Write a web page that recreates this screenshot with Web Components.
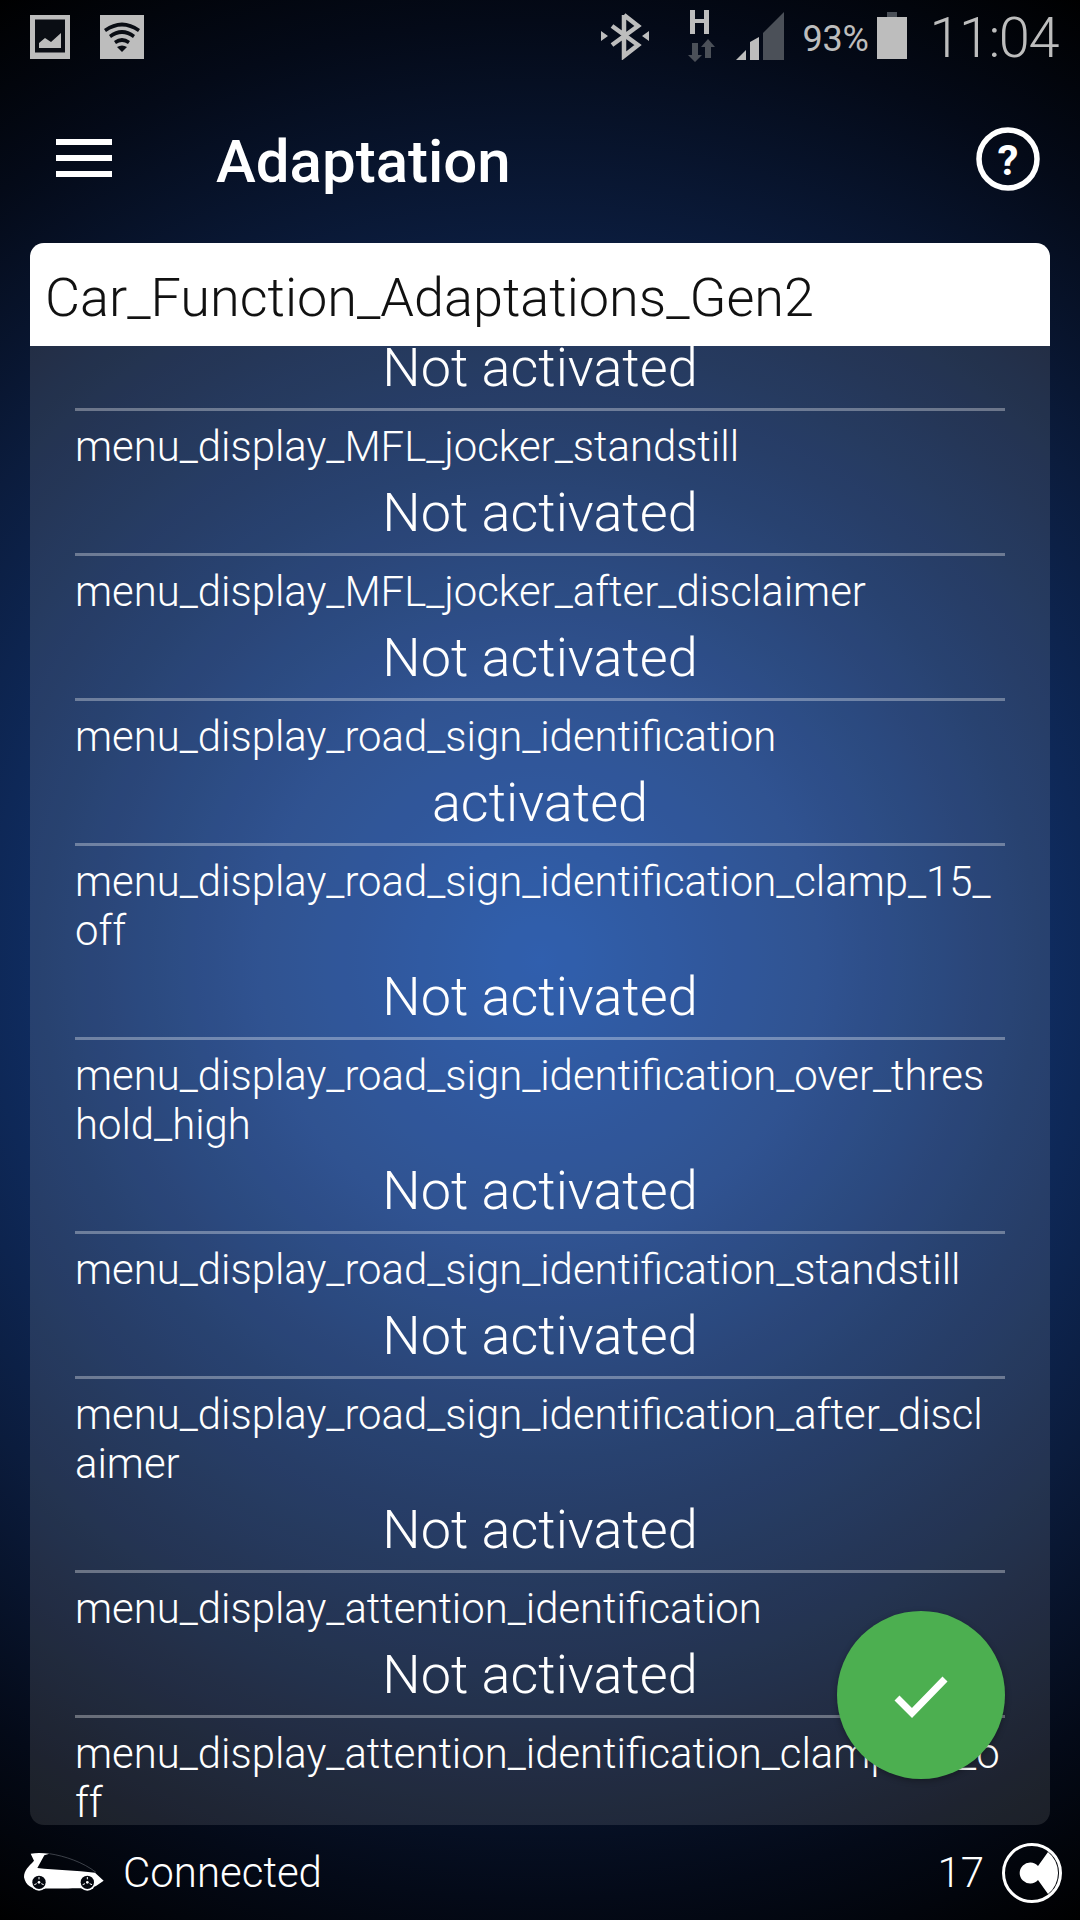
<!DOCTYPE html>
<html>
<head>
<meta charset="utf-8">
<style>
  html, body { margin: 0; padding: 0; }
  body {
    width: 1080px;
    height: 1920px;
    overflow: hidden;
    font-family: Roboto, "Liberation Sans", sans-serif;
    color: #fff;
    background: radial-gradient(circle 1105px at 540px 960px, #184da5 0%, #183f85 25%, #0f2c60 45%, #0b1c3d 65%, #040a18 85%, #000 100%);
  }
  #page { position: relative; display: flex; flex-direction: column; height: 1920px; }
</style>
</head>
<body>
<div id="page">
  <status-bar></status-bar>
  <app-toolbar title="Adaptation"></app-toolbar>
  <adaptation-card title="Car_Function_Adaptations_Gen2">
    <adaptation-row clipped value="Not activated"></adaptation-row>
    <adaptation-row label="menu_display_MFL_jocker_standstill" value="Not activated"></adaptation-row>
    <adaptation-row label="menu_display_MFL_jocker_after_disclaimer" value="Not activated"></adaptation-row>
    <adaptation-row label="menu_display_road_sign_identification" value="activated"></adaptation-row>
    <adaptation-row label="menu_display_road_sign_identification_clamp_15_off" value="Not activated"></adaptation-row>
    <adaptation-row label="menu_display_road_sign_identification_over_threshold_high" value="Not activated"></adaptation-row>
    <adaptation-row label="menu_display_road_sign_identification_standstill" value="Not activated"></adaptation-row>
    <adaptation-row label="menu_display_road_sign_identification_after_disclaimer" value="Not activated"></adaptation-row>
    <adaptation-row label="menu_display_attention_identification" value="Not activated"></adaptation-row>
    <adaptation-row label="menu_display_attention_identification_clamp_15_off" last></adaptation-row>
  </adaptation-card>
  <app-footer status="Connected" count="17"></app-footer>
  <fab-button></fab-button>
</div>

<script>
// Phone status bar
class StatusBar extends HTMLElement {
  constructor() {
    super();
    this.attachShadow({ mode: "open" });
  }

  connectedCallback() {
    this.shadowRoot.innerHTML = `
      <style>
        :host { display: flex; height: 75px; flex: none; align-items: flex-start; color: #bdbdbd; }
        svg { display: block; flex: none; }
        .left { display: flex; gap: 30px; padding: 15px 0 0 30px; }
        .right { display: flex; margin-left: auto; padding: 12px 22px 0 0; align-items: flex-start; }
        .pct { font-size: 36px; font-weight: 400; line-height: 48px; width: 64px; margin: 3px 11px 0 18px; letter-spacing: -.2px; white-space: nowrap; }
        .time { font-size: 56px; font-weight: 300; line-height: 48px; letter-spacing: -1.5px; margin: 2px 0 0 22px; white-space: nowrap; }
      </style>
      <div class="left">
        <svg width="40" height="44" viewBox="0 0 40 44">
          <rect width="40" height="44" fill="#bdbdbd"/>
          <rect x="5" y="4.5" width="30" height="33" fill="#0a0d14"/>
          <path d="M9 33 V28 L15 23 L21 27 L31 18 V33 Z" fill="#bdbdbd"/>
        </svg>
        <svg width="44" height="44" viewBox="0 0 44 44">
          <rect width="44" height="44" fill="#bdbdbd"/>
          <path d="M4 14 Q22 1 40 14 L38 17 Q22 6 6 17 Z" fill="#0a0d14"/>
          <path d="M9 20 Q22 10 35 20 L33 23 Q22 15 11 23 Z" fill="#0a0d14"/>
          <path d="M14 26 Q22 20 30 26 L28 29 Q22 25 16 29 Z" fill="#0a0d14"/>
          <path d="M17 32 Q22 29 27 32 L22 37 Z" fill="#0a0d14"/>
        </svg>
      </div>
      <div class="right">
        <svg width="48" height="48" viewBox="0 0 48 48" style="margin-right:39px">
          <path d="M23 3 V44 L37 33 L11 14 M23 3 L37 14 L11 33" fill="none" stroke="#bdbdbd" stroke-width="4.5"/>
          <path d="M0 19 L7 24 L0 29 Z M48 19 L41 24 L48 29 Z" fill="#bdbdbd"/>
        </svg>
        <svg width="27" height="52" viewBox="0 0 27 52" style="margin:-2px 21px 0 0">
          <path d="M2 0 H7 V9 H16 V0 H21 V24 H16 V13 H7 V24 H2 Z" fill="#bdbdbd"/>
          <path d="M4 33 H10 V45 H14 L7 52 L0 45 H4 Z" fill="#4b5058"/>
          <path d="M17 48 V37 H13 L20 29 L27 37 H23 V48 Z" fill="#4b5058"/>
        </svg>
        <svg width="48" height="48" viewBox="0 0 48 48">
          <path d="M0 48 L10 38 V48 Z" fill="#bdbdbd"/>
          <path d="M14 30 L23 25 V48 H14 Z" fill="#bdbdbd"/>
          <path d="M27 21 L48 0 V48 H27 Z" fill="#4b5058"/>
        </svg>
        <span class="pct">93%</span>
        <svg width="30" height="48" viewBox="0 0 30 48">
          <path d="M10 0 H20 V6 H10 Z" fill="#4b5058"/>
          <rect y="5" width="30" height="42" fill="#bdbdbd"/>
        </svg>
        <span class="time">11:04</span>
      </div>
    `;
  }
}

// Top toolbar with menu, title and help
class AppToolbar extends HTMLElement {
  constructor() {
    super();
    this.attachShadow({ mode: "open" });
  }

  connectedCallback() {
    const title = this.getAttribute("title") || "";
    this.shadowRoot.innerHTML = `
      <style>
        :host { display: flex; flex: none; height: 168px; align-items: center; padding: 0 0 0 56px; box-sizing: border-box; }
        .menu { display: flex; flex-direction: column; gap: 10px; width: 56px; margin-top: -2px; }
        .menu i { display: block; height: 6px; background: #fff; }
        h1 { margin: 5px 0 0 104px; font-size: 60px; font-weight: 500; line-height: 66px; color: #fff; }
        svg { margin-left: auto; margin-right: 40px; display: block; }
      </style>
      <div class="menu"><i></i><i></i><i></i></div>
      <h1>${title}</h1>
      <svg width="64" height="64" viewBox="0 0 64 64">
        <circle cx="32" cy="32" r="29" fill="none" stroke="#fff" stroke-width="5.5"/>
        <text x="32" y="48" text-anchor="middle" font-family="Roboto, sans-serif" font-size="42" font-weight="700" fill="#fff">?</text>
      </svg>
    `;
  }
}

// Card with white title and a scrolled list of rows
class AdaptationCard extends HTMLElement {
  constructor() {
    super();
    this.attachShadow({ mode: "open" });
  }

  connectedCallback() {
    const title = this.getAttribute("title") || "";
    this.shadowRoot.innerHTML = `
      <style>
        :host {
          display: flex; flex-direction: column; flex: none; height: 1582px; margin: 0 30px; overflow: hidden;
          border-radius: 14px;
          background: rgba(255,255,255,.105);
        }
        .head { flex: none; height: 103px; overflow: hidden; background: #fff; color: #111; font-size: 54px; font-weight: 300; line-height: 109px; padding-left: 15px; white-space: nowrap; }
        .list { flex: 1; min-height: 0; overflow: hidden; padding: 0 45px; }
      </style>
      <div class="head">${title}</div>
      <div class="list"><slot></slot></div>
    `;
  }
}

// One adaptation entry: label, centred value, divider
class AdaptationRow extends HTMLElement {
  constructor() {
    super();
    this.attachShadow({ mode: "open" });
  }

  connectedCallback() {
    const label = this.getAttribute("label");
    const value = this.getAttribute("value");
    const last = this.hasAttribute("last");
    this.shadowRoot.innerHTML = `
      <style>
        :host { display: block; box-sizing: border-box; font-weight: 300; color: #fff; ${last ? "" : "border-bottom: 3px solid rgba(255,255,255,.33);"} }
        :host([clipped]) { height: 65px; overflow: hidden; }
        .label { font-size: 41.85px; line-height: 49px; padding-top: 11px; word-break: break-all; }
        .value { font-size: 54px; line-height: 59px; height: 59px; padding: 12px 0 11px; text-align: center; white-space: nowrap; }
        :host([clipped]) .value { padding: 0; margin-top: -8px; }
      </style>
      ${label ? `<div class="label">${label}</div>` : ""}
      ${value ? `<div class="value">${value}</div>` : ""}
    `;
  }
}

// Bottom connection status
class AppFooter extends HTMLElement {
  constructor() {
    super();
    this.attachShadow({ mode: "open" });
  }

  connectedCallback() {
    const status = this.getAttribute("status") || "";
    const count = this.getAttribute("count") || "";
    this.shadowRoot.innerHTML = `
      <style>
        :host { display: flex; flex: 1; align-items: center; padding: 0 18px 0 24px; font-size: 42px; font-weight: 300; color: #fff; }
        svg { display: block; flex: none; }
        .status { margin-left: 19px; }
        .count { margin-left: auto; margin-right: 18px; }
      </style>
      <svg width="80" height="40" viewBox="72 218 240 118">
        <!-- body, the roof is only a thin line over the dark window -->
        <path d="M92 219 C110 216 130 217 148 219 L133 224 L112 262 C165 268 230 270 285 276 L311 300 L288 316 C270 326 170 322 130 324 C100 328 78 318 72 290 C72 268 86 258 102 240 Z" fill="#fff"/>
        <path d="M148 219 C195 226 250 245 288 275" fill="none" stroke="#5a5f68" stroke-width="2"/>
        <circle cx="117" cy="305" r="25" fill="#fff"/>
        <circle cx="262" cy="305" r="25" fill="#fff"/>
        <circle cx="117" cy="305" r="20" fill="#05080f"/>
        <circle cx="262" cy="305" r="20" fill="#05080f"/>
        <circle cx="117" cy="305" r="4" fill="#fff"/>
        <circle cx="262" cy="305" r="4" fill="#fff"/>
        <path d="M117 289 V296 M103 312 L110 309 M131 312 L124 309 M262 289 V296 M248 312 L255 309 M276 312 L269 309" stroke="#fff" stroke-width="3"/>
      </svg>
      <span class="status">${status}</span>
      <span class="count">${count}</span>
      <svg width="60" height="60" viewBox="0 0 60 60">
        <circle cx="30" cy="30" r="28.5" fill="none" stroke="#fff" stroke-width="3"/>
        <path d="M46 9 L36 23 A10.5 10.5 0 1 0 36 37 L46 51 A27 27 0 0 0 46 9 Z" fill="#fff"/>
      </svg>
    `;
  }
}

// Floating confirm button, lies over the list
class FabButton extends HTMLElement {
  constructor() {
    super();
    this.attachShadow({ mode: "open" });
  }

  connectedCallback() {
    this.shadowRoot.innerHTML = `
      <style>
        :host {
          position: absolute; left: 837px; top: 1611px; width: 168px; height: 168px; border-radius: 50%;
          display: block;
          background: #4caf50; box-shadow: 0 2px 6px rgba(0,0,0,.3);
        }
        svg { display: block; }
      </style>
      <svg width="168" height="168" viewBox="0 0 168 168">
        <path d="M60 87 L75 102 L108 68" fill="none" stroke="#fff" stroke-width="7"/>
      </svg>
    `;
  }
}

// Register Custom Elements
customElements.define("status-bar", StatusBar);
customElements.define("app-toolbar", AppToolbar);
customElements.define("adaptation-card", AdaptationCard);
customElements.define("adaptation-row", AdaptationRow);
customElements.define("app-footer", AppFooter);
customElements.define("fab-button", FabButton);
</script>
</body>
</html>
